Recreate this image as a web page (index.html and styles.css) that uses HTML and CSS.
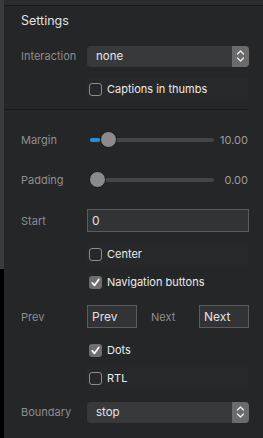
FILE: index.html
```html
<html>

<head>
  <link rel="stylesheet" href="styles.css">
</head>

<body>
  <div class="app">
    <!-- left window edge -->
    <div class="edge">
      <div class="edge-top"></div>
      <div class="edge-bottom"></div>
    </div>

    <div class="panel">
      <div class="panel-top"></div>
      <div class="panel-title">Settings</div>

      <!-- Interaction -->
      <div class="row row-interaction">
        <span class="label">Interaction</span>
        <div class="select">
          <span class="select-text">none</span>
          <span class="select-arrows">
            <svg width="9" height="14" viewBox="0 0 9 14"><path d="M1.5 5 L4.5 2 L7.5 5 M1.5 9 L4.5 12 L7.5 9" fill="none" stroke="#f0f0f0" stroke-width="1.3" stroke-linecap="round" stroke-linejoin="round"/></svg>
          </span>
        </div>
      </div>

      <div class="row row-captions">
        <span class="label"></span>
        <label class="check check-boxed">
          <span class="box"></span>
          <span class="check-text">Captions in thumbs</span>
        </label>
      </div>

      <div class="separator"></div>

      <!-- Sliders -->
      <div class="row row-margin">
        <span class="label">Margin</span>
        <div class="slider">
          <div class="track">
            <div class="track-fill" style="width: 10px;"></div>
            <div class="thumb" style="left: 10px;"></div>
          </div>
          <span class="slider-value">10.00</span>
        </div>
      </div>

      <div class="row row-padding">
        <span class="label">Padding</span>
        <div class="slider">
          <div class="track">
            <div class="thumb" style="left: -1px;"></div>
          </div>
          <span class="slider-value">0.00</span>
        </div>
      </div>

      <div class="row row-start">
        <span class="label">Start</span>
        <input class="text-input" type="text" value="0">
      </div>

      <div class="row row-center">
        <span class="label"></span>
        <label class="check check-boxed">
          <span class="box"></span>
          <span class="check-text">Center</span>
        </label>
      </div>

      <div class="row row-nav">
        <span class="label"></span>
        <label class="check">
          <span class="box box-checked">
            <svg width="13" height="13" viewBox="0 0 13 13"><path d="M3.2 6.8 L5.4 9.4 L9.8 3.4" fill="none" stroke="#fff" stroke-width="1.7" stroke-linecap="round" stroke-linejoin="round"/></svg>
          </span>
          <span class="check-text">Navigation buttons</span>
        </label>
      </div>

      <div class="row row-prev">
        <span class="label">Prev</span>
        <div class="pair">
          <input class="text-input small-input" type="text" value="Prev">
          <span class="label label-inline">Next</span>
          <input class="text-input small-input" type="text" value="Next">
        </div>
      </div>

      <div class="row row-dots">
        <span class="label"></span>
        <label class="check">
          <span class="box box-checked">
            <svg width="13" height="13" viewBox="0 0 13 13"><path d="M3.2 6.8 L5.4 9.4 L9.8 3.4" fill="none" stroke="#fff" stroke-width="1.7" stroke-linecap="round" stroke-linejoin="round"/></svg>
          </span>
          <span class="check-text">Dots</span>
        </label>
      </div>

      <div class="row row-rtl">
        <span class="label"></span>
        <label class="check check-boxed">
          <span class="box"></span>
          <span class="check-text">RTL</span>
        </label>
      </div>

      <!-- Boundary -->
      <div class="row row-boundary">
        <span class="label">Boundary</span>
        <div class="select">
          <span class="select-text">stop</span>
          <span class="select-arrows">
            <svg width="9" height="14" viewBox="0 0 9 14"><path d="M1.5 5 L4.5 2 L7.5 5 M1.5 9 L4.5 12 L7.5 9" fill="none" stroke="#f0f0f0" stroke-width="1.3" stroke-linecap="round" stroke-linejoin="round"/></svg>
          </span>
        </div>
      </div>
    </div>
  </div>
</body>

</html>
```

FILE: styles.css
```css
html,
body {
  margin: 0;
  padding: 0;
  height: 100%;
}

body {
  background-color: #252628;
  font-family: Inter, "Noto Sans", sans-serif;
  overflow: hidden;
}

.app {
  display: flex;
  width: 263px;
  height: 438px;
}

/* window edge on the left */
.edge {
  display: flex;
  flex-direction: column;
  flex: 0 0 4px;
}

.edge-top {
  height: 269px;
  background-color: #3b3b3c;
}

.edge-bottom {
  flex: 1;
  background-color: #000;
}

.panel {
  flex: 1;
  min-width: 0;
  padding-right: 14px;
}

.panel-top {
  height: 5px;
  margin-right: -14px;
  background-color: #2b2c2e;
  border-bottom: 1px solid #18191a;
}

.panel-title {
  height: 30px;
  line-height: 30px;
  padding-left: 17px;
  font-size: 12.5px;
  color: #e2e2e2;
}

.row {
  display: flex;
  align-items: center;
  height: 22px;
  padding-left: 17px;
}

.label {
  flex: 0 0 66px;
  font-size: 11px;
  color: #8e8e8e;
}

.row-interaction { margin-top: 9px; }
.row-captions { margin-top: 11px; }
.row-margin { margin-top: 20px; height: 20px; }
.row-padding { margin-top: 20px; height: 20px; }
.row-start { margin-top: 19px; height: 23px; }
.row-center { margin-top: 11px; }
.row-nav { margin-top: 6px; }
.row-prev { margin-top: 12px; height: 23px; }
.row-dots { margin-top: 11px; }
.row-rtl { margin-top: 6px; }
.row-boundary { margin-top: 12px; }

.separator {
  margin-top: 9px;
  height: 0;
  border-bottom: 1px solid #1a1a1b;
  margin-right: 1px;
}

/* select box */
.select {
  flex: 1;
  min-width: 0;
  display: flex;
  align-items: center;
  height: 21px;
  border-radius: 4px;
  background-color: #38393b;
  overflow: hidden;
}

.select-text {
  flex: 1;
  padding-left: 9px;
  font-size: 11.5px;
  color: #e6e6e6;
}

.select-arrows {
  display: flex;
  align-items: center;
  justify-content: center;
  width: 17px;
  height: 100%;
  background-color: #6b6b6b;
}

/* checkboxes */
.check {
  flex: 1;
  min-width: 0;
  display: flex;
  align-items: center;
  height: 22px;
  padding-left: 2px;
}

.check-boxed {
  background-color: #27282a;
  margin-right: 1px;
}

.box {
  flex: 0 0 auto;
  box-sizing: border-box;
  width: 13px;
  height: 13px;
  border: 1px solid #8c8c8c;
  border-radius: 3px;
}

.box-checked {
  border: none;
  background-color: #6e6e6e;
}

.box-checked svg {
  display: block;
}

.check-text {
  padding-left: 5px;
  font-size: 11px;
  color: #ececec;
}

/* sliders */
.slider {
  flex: 1;
  min-width: 0;
  display: flex;
  align-items: center;
}

.track {
  position: relative;
  flex: 1;
  height: 4px;
  margin-left: 3px;
  border-radius: 2px;
  background-color: #454547;
}

.track-fill {
  height: 4px;
  border-radius: 2px;
  background-color: #2a8fd1;
}

.thumb {
  position: absolute;
  top: -7px;
  box-sizing: border-box;
  width: 17px;
  height: 17px;
  border-radius: 50%;
  border: 1px solid #161616;
  background-color: #8b8b8b;
}

.slider-value {
  flex: 0 0 34px;
  margin-right: 1px;
  text-align: right;
  font-size: 11px;
  color: #9c9c9c;
}

/* text inputs */
.text-input {
  flex: 1;
  width: 0;
  min-width: 0;
  box-sizing: border-box;
  height: 23px;
  margin: 0;
  padding: 0 4px;
  border: 1px solid #5c5c5e;
  background-color: #323335;
  font-family: Inter, "Noto Sans", sans-serif;
  font-size: 12px;
  color: #e2e2e2;
  outline: none;
}

.pair {
  flex: 1;
  min-width: 0;
  display: flex;
  align-items: center;
}

.small-input {
  flex: 0 0 50px;
  width: 50px;
}

.label-inline {
  flex: 1;
  padding-left: 14px;
}
```
